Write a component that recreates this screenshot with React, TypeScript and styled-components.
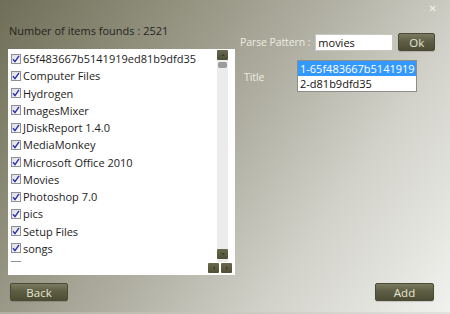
import styled, { createGlobalStyle } from 'styled-components'

const GlobalStyle = createGlobalStyle`
  html, body { margin: 0; padding: 0; }
  body { font-family: "Open Sans", "Noto Sans", sans-serif; }
`

const items = [
  '65f483667b5141919ed81b9dfd35',
  'Computer Files',
  'Hydrogen',
  'ImagesMixer',
  'JDiskReport 1.4.0',
  'MediaMonkey',
  'Microsoft Office 2010',
  'Movies',
  'Photoshop 7.0',
  'pics',
  'Setup Files',
  'songs',
  'Sofware',
]

const titles = ['1-65f483667b5141919', '2-d81b9dfd35']

const Window = styled.div`
  position: relative;
  width: 450px;
  height: 314px;
  box-sizing: border-box;
  display: flex;
  flex-direction: column;
  background: linear-gradient(125deg, #6f6e57 0%, #8c8b77 22%, #aeada0 48%, #d2d2ca 72%, #f1f1ee 100%);
  border-bottom: 2px solid rgba(255, 255, 255, 0.45);
  overflow: hidden;
`

const Close = styled.div`
  position: absolute;
  top: 3px;
  right: 13px;
  color: #f2f2ea;
  font-family: "DejaVu Sans", sans-serif;
  font-weight: bold;
  font-size: 10px;
`

const Main = styled.div`
  flex: 1;
  display: flex;
`

const LeftPane = styled.div`
  width: 227px;
  margin-left: 8px;
  padding-top: 23px;
  display: flex;
  flex-direction: column;
`

const Count = styled.div`
  font-size: 11px;
  color: #25251c;
  height: 26px;
  padding-left: 1px;
`

const ListBox = styled.div`
  height: 226px;
  background: #fff;
  display: flex;
  flex-direction: column;
  box-sizing: border-box;
  padding: 1px 3px 2px 3px;
`

const ListTop = styled.div`
  flex: 1;
  display: flex;
  min-height: 0;
`

const Rows = styled.div`
  flex: 1;
  overflow: hidden;
`

const Row = styled.div`
  height: 17.25px;
  display: flex;
  align-items: center;
  gap: 2px;
  font-size: 11px;
  color: #1c1c1c;
  white-space: nowrap;
`

const Box = styled.span`
  width: 10px;
  height: 10px;
  box-sizing: border-box;
  border: 1px solid #8e8f99;
  background: linear-gradient(135deg, #dcdce2, #fbfbfc);
  display: flex;
  align-items: center;
  justify-content: center;
  flex-shrink: 0;
`

const VScroll = styled.div`
  width: 11px;
  margin-right: 4px;
  padding-bottom: 3px;
  display: flex;
  flex-direction: column;
  background: #ececec;
`

const ScrollBtn = styled.div`
  width: 11px;
  height: 10px;
  border-radius: 1px;
  background: linear-gradient(#68684e, #4f4f38);
  display: flex;
  align-items: center;
  justify-content: center;
  flex-shrink: 0;
`

const Thumb = styled.div`
  height: 6px;
  margin: 2px 1px 0;
  border-radius: 2px;
  background: #9b9b9b;
`

const Track = styled.div`
  flex: 1;
`

const Corner = styled.div`
  height: 10px;
  margin-top: 1px;
  display: flex;
  justify-content: flex-end;
  gap: 2px;
`

const RightPane = styled.div`
  flex: 1;
  padding: 33px 0 0 5px;
  display: flex;
  flex-direction: column;
`

const FormRow = styled.div`
  display: flex;
  align-items: center;
`

const Label = styled.span`
  margin-right: 5px;
  font-size: 10.5px;
  letter-spacing: -0.1px;
  color: #ececE2;
  white-space: nowrap;
  flex-shrink: 0;
`

const TextInput = styled.div`
  width: 78px;
  height: 17px;
  box-sizing: border-box;
  background: #fff;
  border: 1px solid #c8c8c0;
  font-size: 11px;
  color: #111;
  padding-left: 2px;
  display: flex;
  align-items: center;
`

const Button = styled.div<{ $width: number }>`
  width: ${(p) => p.$width}px;
  height: 18px;
  border-radius: 2px;
  box-sizing: border-box;
  border: 1px solid #4a4a36;
  background: linear-gradient(#7a7a60 0%, #5e5e44 45%, #4d4d35 100%);
  box-shadow: 0 1px 1px rgba(0, 0, 0, 0.15);
  color: #e6e6d6;
  font-size: 11.5px;
  display: flex;
  align-items: center;
  justify-content: center;
`

const OkButton = styled(Button)`
  margin-left: 5px;
`

const TitleRow = styled(FormRow)`
  margin-top: 9px;
`

const TitleLabel = styled(Label)`
  width: 57px;
  margin-right: 0;
  padding: 2px 0 0 4px;
  box-sizing: border-box;
`

const TitleList = styled.div`
  width: 120px;
  height: 32px;
  box-sizing: border-box;
  border: 1px solid #8e8e88;
  background: #fff;
`

const TitleItem = styled.div<{ $selected?: boolean }>`
  height: 15px;
  padding-left: 2px;
  font-size: 11px;
  line-height: 15px;
  color: ${(p) => (p.$selected ? '#fff' : '#111')};
  background: ${(p) => (p.$selected ? '#3399ff' : 'transparent')};
`

const Footer = styled.div`
  height: 37px;
  display: flex;
  justify-content: space-between;
  align-items: flex-start;
  padding: 8px 16px 0 10px;
  box-sizing: border-box;
`

const Check = () => (
  <svg width="8" height="8" viewBox="0 0 8 8">
    <path d="M1 4.2 L3 6.6 L7 0.8" fill="none" stroke="#2b2fa8" strokeWidth="1.4" />
  </svg>
)

const Arrow = ({ dir }: { dir: 'up' | 'down' | 'left' | 'right' }) => {
  const d = {
    up: 'M1 4 L3 2 L5 4 Z',
    down: 'M1 2 L3 4 L5 2 Z',
    left: 'M4 1 L2 3 L4 5 Z',
    right: 'M2 1 L4 3 L2 5 Z',
  }[dir]
  return (
    <svg width="6" height="6" viewBox="0 0 6 6">
      <path d={d} fill="#3a3a28" />
    </svg>
  )
}

const App = () => {
  return (
    <Window>
      <GlobalStyle />
      <Close>✕</Close>
      <Main>
        <LeftPane>
          <Count>Number of items founds : 2521</Count>
          <ListBox>
            <ListTop>
              <Rows>
                {items.map((name) => (
                  <Row key={name}>
                    <Box>
                      <Check />
                    </Box>
                    {name}
                  </Row>
                ))}
              </Rows>
              <VScroll>
                <ScrollBtn>
                  <Arrow dir="up" />
                </ScrollBtn>
                <Thumb />
                <Track />
                <ScrollBtn>
                  <Arrow dir="down" />
                </ScrollBtn>
              </VScroll>
            </ListTop>
            <Corner>
              <ScrollBtn>
                <Arrow dir="left" />
              </ScrollBtn>
              <ScrollBtn>
                <Arrow dir="right" />
              </ScrollBtn>
            </Corner>
          </ListBox>
        </LeftPane>
        <RightPane>
          <FormRow>
            <Label>Parse Pattern :</Label>
            <TextInput>movies</TextInput>
            <OkButton $width={37}>Ok</OkButton>
          </FormRow>
          <TitleRow>
            <TitleLabel>Title</TitleLabel>
            <TitleList>
              {titles.map((t, i) => (
                <TitleItem key={t} $selected={i === 0}>
                  {t}
                </TitleItem>
              ))}
            </TitleList>
          </TitleRow>
        </RightPane>
      </Main>
      <Footer>
        <Button $width={58}>Back</Button>
        <Button $width={59}>Add</Button>
      </Footer>
    </Window>
  )
}

export default App
